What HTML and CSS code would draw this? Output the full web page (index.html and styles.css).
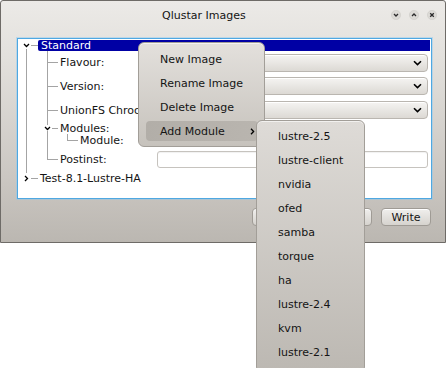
FILE: index.html
```html
<!DOCTYPE html>
<html lang="en">
<head>
  <meta charset="UTF-8" />
  <title>Qlustar Images</title>
  <link rel="stylesheet" href="styles.css">
</head>
<body>
  <div class="window">
    <div class="titlebar">
      <span class="title">Qlustar Images</span>
      <div class="wm-buttons">
        <svg width="10" height="10" viewBox="0 0 10 10"><circle cx="5" cy="5" r="4.6" class="wm-dot"/><path d="M3 4l2 2 2-2" class="wm-glyph"/></svg>
        <svg width="10" height="10" viewBox="0 0 10 10"><circle cx="5" cy="5" r="4.6" class="wm-dot"/><path d="M3 6l2-2 2 2" class="wm-glyph"/></svg>
        <svg width="10" height="10" viewBox="0 0 10 10"><circle cx="5" cy="5" r="4.6" class="wm-dot"/><path d="M3.2 3.2l3.6 3.6M6.8 3.2l-3.6 3.6" class="wm-glyph"/></svg>
      </div>
    </div>

    <div class="content">
      <div class="tree">
        <div class="row row-top">
          <span class="g c1 exp-first"><svg width="7" height="5" viewBox="0 0 7 5"><path d="M1 1l2.5 2.5L6 1" class="arrow"/></svg></span>
          <span class="selected">Standard</span>
        </div>
        <div class="row row-first">
          <span class="g c1 pipe"></span><span class="g tee"></span>
          <span class="label">Flavour:</span>
          <div class="combo"><svg width="9" height="6" viewBox="0 0 9 6"><path d="M1 1.2l3.5 3.4L8 1.2" class="chev"/></svg></div>
        </div>
        <div class="row row-field">
          <span class="g c1 pipe"></span><span class="g tee"></span>
          <span class="label">Version:</span>
          <div class="combo"><svg width="9" height="6" viewBox="0 0 9 6"><path d="M1 1.2l3.5 3.4L8 1.2" class="chev"/></svg></div>
        </div>
        <div class="row row-field">
          <span class="g c1 pipe"></span><span class="g tee"></span>
          <span class="label">UnionFS Chroot:</span>
          <div class="combo"><svg width="9" height="6" viewBox="0 0 9 6"><path d="M1 1.2l3.5 3.4L8 1.2" class="chev"/></svg></div>
        </div>
        <div class="row row-short">
          <span class="g c1 pipe"></span>
          <span class="g exp-mid"><svg width="7" height="5" viewBox="0 0 7 5"><path d="M1 1l2.5 2.5L6 1" class="arrow"/></svg></span>
          <span class="text">Modules:</span>
        </div>
        <div class="row row-sub">
          <span class="g c1 pipe"></span><span class="g pipe"></span><span class="g end"></span>
          <span class="text">Module:</span>
        </div>
        <div class="row row-field">
          <span class="g c1 pipe"></span><span class="g end"></span>
          <span class="label label-wide">Postinst:</span>
          <div class="field"></div>
        </div>
        <div class="row row-last">
          <span class="g c1 exp-last"><svg width="7" height="7" viewBox="0 0 7 7"><path d="M2 1l2.5 2.5L2 6" class="arrow"/></svg></span>
          <span class="text">Test-8.1-Lustre-HA</span>
        </div>
      </div>

      <div class="buttons">
        <button class="btn btn-wide"></button>
        <button class="btn">Write</button>
      </div>
    </div>
  </div>

  <div class="menu context">
    <div class="menu-item">New Image</div>
    <div class="menu-item">Rename Image</div>
    <div class="menu-item">Delete Image</div>
    <div class="menu-item active">Add Module
      <svg width="5" height="7" viewBox="0 0 5 7"><path d="M1 0.8l2.6 2.7L1 6.2" class="arrow"/></svg>
    </div>
  </div>

  <div class="menu submenu">
    <div class="menu-item">lustre-2.5</div>
    <div class="menu-item">lustre-client</div>
    <div class="menu-item">nvidia</div>
    <div class="menu-item">ofed</div>
    <div class="menu-item">samba</div>
    <div class="menu-item">torque</div>
    <div class="menu-item">ha</div>
    <div class="menu-item">lustre-2.4</div>
    <div class="menu-item">kvm</div>
    <div class="menu-item">lustre-2.1</div>
  </div>
</body>
</html>
```

FILE: styles.css
```css
* {
  box-sizing: border-box;
}

html, body {
  margin: 0;
  height: 100%;
  overflow: hidden;
}

body {
  position: relative;
  background: #fff;
  font-family: "DejaVu Sans", Verdana, sans-serif;
  font-size: 11px;
  color: #141414;
}

/* window frame */

.window {
  width: 446px;
  height: 243px;
  border: 1px solid #6e6b67;
  border-radius: 3px 3px 0 0;
  background: linear-gradient(#eceae7, #e2e0dc 60px, #cac6c1 180px, #bbb7b1);
}

.titlebar {
  height: 29px;
  display: flex;
  align-items: center;
  padding-left: 161px;
}

.title {
  flex: 1;
}

.wm-buttons {
  display: flex;
  gap: 8px;
  margin-right: 8px;
  margin-top: -2px;
}

.wm-dot {
  fill: #dcdad6;
  stroke: #cfccc7;
  stroke-width: 0.6;
}

.wm-glyph {
  fill: none;
  stroke: #2b2b2b;
  stroke-width: 1.3;
}

.content {
  padding: 8px 13px 0 16px;
}

/* tree view */

.tree {
  height: 161px;
  padding-top: 1px;
  background: #fff;
  border: 1px solid #4ea8e2;
  box-shadow: 0 0 0 1px rgba(140, 200, 240, 0.45);
}

.row {
  display: flex;
  align-items: stretch;
}

.row-top { height: 11px; }
.row-first { height: 23px; }
.row-field { height: 24px; }
.row-short { height: 12px; }
.row-sub { height: 13px; }
.row-last { height: 14px; }

.g {
  --lx: 9px;
  --line: #a4a4a4;
  flex: none;
  width: 20px;
  display: flex;
  align-items: center;
  background-repeat: no-repeat;
}

.g.c1 {
  --lx: 8px;
}

.g svg {
  margin-left: calc(var(--lx) - 3px);
}

.pipe {
  background-image: linear-gradient(var(--line), var(--line));
  background-size: 1px 100%;
  background-position: var(--lx) 0;
}

.tee {
  background-image: linear-gradient(var(--line), var(--line)), linear-gradient(var(--line), var(--line));
  background-size: 1px 100%, calc(100% - var(--lx)) 1px;
  background-position: var(--lx) 0, var(--lx) 50%;
}

.end {
  background-image: linear-gradient(var(--line), var(--line)), linear-gradient(var(--line), var(--line));
  background-size: 1px 50%, calc(100% - var(--lx)) 1px;
  background-position: var(--lx) 0, var(--lx) 50%;
}

.exp-first {
  background-image: linear-gradient(var(--line), var(--line)), linear-gradient(var(--line), var(--line));
  background-size: 1px calc(50% - 3px), calc(100% - var(--lx) - 5px) 1px;
  background-position: var(--lx) 100%, calc(var(--lx) + 5px) 50%;
}

.exp-mid {
  background-image: linear-gradient(var(--line), var(--line)), linear-gradient(var(--line), var(--line)), linear-gradient(var(--line), var(--line));
  background-size: 1px calc(50% - 3px), 1px calc(50% - 3px), calc(100% - var(--lx) - 5px) 1px;
  background-position: var(--lx) 0, var(--lx) 100%, calc(var(--lx) + 5px) 50%;
}

.exp-last {
  background-image: linear-gradient(var(--line), var(--line)), linear-gradient(var(--line), var(--line));
  background-size: 1px calc(50% - 5px), calc(100% - var(--lx) - 5px) 1px;
  background-position: var(--lx) 0, calc(var(--lx) + 5px) 50%;
}

.arrow {
  fill: none;
  stroke: #000;
  stroke-width: 1.3;
}

.selected {
  flex: 1;
  margin-right: 1px;
  padding-left: 3px;
  line-height: 11px;
  background: #0000a4;
  color: #fff;
  border-radius: 2px 0 0 2px;
}

.label {
  flex: none;
  width: 92px;
  padding-left: 2px;
  display: flex;
  align-items: center;
  white-space: nowrap;
  overflow: hidden;
}

.label-wide {
  width: 99px;
}

.text {
  padding-left: 2px;
  display: flex;
  align-items: center;
  white-space: nowrap;
}

.combo {
  flex: 1;
  align-self: center;
  height: 18px;
  margin-right: 3px;
  padding-right: 5px;
  display: flex;
  align-items: center;
  justify-content: flex-end;
  border: 1px solid #bab6b0;
  border-radius: 4px;
  background: linear-gradient(#f5f4f2, #dcd9d4);
  box-shadow: inset 0 1px 0 #fff;
}

.chev {
  fill: none;
  stroke: #000;
  stroke-width: 1.6;
}

.field {
  flex: 1;
  align-self: center;
  height: 17px;
  margin-right: 3px;
  border: 1px solid #c6c3be;
  border-radius: 3px;
  background: #fff;
  box-shadow: inset 0 1px 1px rgba(0, 0, 0, 0.06);
}

/* dialog buttons */

.buttons {
  display: flex;
  justify-content: flex-end;
  gap: 9px;
  margin-top: 9px;
  padding-right: 1px;
}

.btn {
  width: 50px;
  height: 18px;
  padding: 0;
  font: inherit;
  color: inherit;
  border: 1px solid #9f9b95;
  border-radius: 4px;
  background: linear-gradient(#f0efed, #d6d3ce);
  box-shadow: inset 0 1px 0 #fff;
}

.btn-wide {
  width: 120px;
}

/* popup menus */

.menu {
  position: absolute;
  display: flex;
  flex-direction: column;
  gap: 4px;
  border: 1px solid #a29e98;
  border-radius: 6px;
  box-shadow: inset 0 1px 0 rgba(255, 255, 255, 0.6);
}

.context {
  left: 138px;
  top: 42px;
  width: 127px;
  padding: 6px 6px 5px 7px;
  background: linear-gradient(#e3e0dc, #c6c2bc);
}

.submenu {
  left: 256px;
  top: 120px;
  width: 109px;
  padding: 5px 7px 10px 7px;
  background: linear-gradient(#dedbd7, #bcb8b2);
}

.menu-item {
  height: 20px;
  padding-left: 14px;
  display: flex;
  align-items: center;
  white-space: nowrap;
}

.menu-item.active {
  background: linear-gradient(90deg, #b2aea8, #b9b5af);
  border-radius: 4px;
}

.menu-item.active svg {
  margin-left: auto;
  margin-right: 3px;
}
```
